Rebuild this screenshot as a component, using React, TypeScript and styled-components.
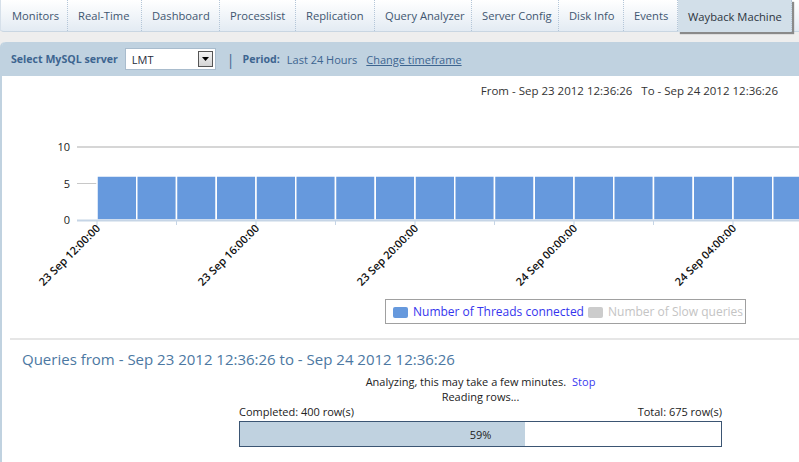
import React from "react";
import styled, { createGlobalStyle } from "styled-components";

const GlobalStyle = createGlobalStyle`
  html, body {
    margin: 0;
    padding: 0;
    background: #ffffff;
    font-family: "Open Sans", "Noto Sans", Arial, sans-serif;
    font-size: 11px;
    color: #333;
  }
`;

const Page = styled.div`
  width: 799px;
  height: 462px;
  overflow: hidden;
  background: #eeeeee;
`;

const TabBar = styled.div`
  display: flex;
  height: 31px;
  background: linear-gradient(#ffffff, #e3ebf3);
  border-bottom: 1px solid #c9d6e2;
  border-bottom-left-radius: 4px;
  font-size: 11.2px;
`;

const Tab = styled.div<{ active?: boolean; w: number }>`
  box-sizing: border-box;
  display: flex;
  align-items: center;
  width: ${({ w }) => w}px;
  padding-left: ${({ active }) => (active ? 10 : 10)}px;
  color: ${({ active }) => (active ? "#2c3440" : "#3f5670")};
  border-right: 1px dotted #b4c6d8;
  white-space: nowrap;
  background: ${({ active }) => (active ? "#d2dfe9" : "transparent")};
  box-shadow: ${({ active }) => (active ? "2px 2px 1px #8a8a8a" : "none")};
  height: ${({ active }) => (active ? "32px" : "31px")};
  &:first-child {
    padding-left: 11px;
    border-left: 1px solid #d6e0ea;
  }
`;

const Gap = styled.div`
  height: 10px;
`;

const Panel = styled.div`
  background: #ffffff;
  border-left: 2px solid #c0d2e0;
  border-top-left-radius: 5px;
  height: 420px;
`;

const FilterBar = styled.div`
  display: flex;
  align-items: center;
  height: 34px;
  padding-left: 9px;
  background: #c0d2e0;
  color: #3d6590;
  border-top-left-radius: 4px;
`;

const Label = styled.span`
  font-weight: 700;
  font-size: 10.6px;
  margin-right: 7px;
`;

const Select = styled.div`
  display: flex;
  align-items: center;
  justify-content: space-between;
  width: 81px;
  height: 20px;
  background: #ffffff;
  border: 1px solid #a9bccd;
  padding: 0 2px 0 6px;
  color: #1f2b3a;
`;

const DropButton = styled.div`
  width: 13px;
  height: 14px;
  border: 1px solid #555;
  background: linear-gradient(#f4f4f4, #d4d4d4);
  display: flex;
  align-items: center;
  justify-content: center;
`;

const Divider = styled.span`
  margin: 0 8px 0 11px;
  font-size: 14px;
  color: #3d6590;
`;

const Plain = styled.span`
  margin-right: 9px;
`;

const Link = styled.span`
  text-decoration: underline;
`;

const RangeLine = styled.div`
  text-align: right;
  padding: 7px 21px 0 0;
  height: 17px;
  font-size: 11.5px;
  color: #333;
`;

const ChartSvg = styled.svg`
  display: block;
  font-family: "Open Sans", "Noto Sans", Arial, sans-serif;
`;

const Rule = styled.div`
  margin: 0 0 0 8px;
  border-top: 2px solid #e6e6e6;
`;

const Heading = styled.div`
  padding: 9px 0 0 20px;
  font-size: 15px;
  color: #4c78a2;
  height: 25px;
`;

const Progress = styled.div`
  width: 483px;
  margin-left: 237px;
  display: flex;
  flex-direction: column;
  align-items: center;
`;

const StatusLine = styled.div`
  height: 15px;
  line-height: 15px;
  color: #222;
`;

const StopLink = styled.span`
  color: #3a3af0;
  margin-left: 6px;
`;

const Counts = styled.div`
  display: flex;
  justify-content: space-between;
  width: 100%;
  height: 15px;
  line-height: 15px;
  color: #222;
`;

const Track = styled.div`
  position: relative;
  box-sizing: border-box;
  width: 100%;
  height: 26px;
  margin-top: 2px;
  border: 1px solid #3b5573;
  background: #ffffff;
  display: flex;
  align-items: center;
  justify-content: center;
`;

const Fill = styled.div`
  position: absolute;
  left: 0;
  top: 0;
  bottom: 0;
  background: #c0d2e0;
`;

const Percent = styled.span`
  position: relative;
  color: #222;
`;

const tabs: [string, number][] = [
  ["Monitors", 68],
  ["Real-Time", 74],
  ["Dashboard", 78],
  ["Processlist", 76],
  ["Replication", 79],
  ["Query Analyzer", 97],
  ["Server Config", 87],
  ["Disk Info", 65],
  ["Events", 54],
];

const Chart = () => {
  const x0 = 97;
  const pitch = 39.75;
  const bars = Array.from({ length: 18 }, (_, i) => x0 + i * pitch);
  const ticks = Array.from({ length: 10 }, (_, i) => x0 + i * pitch * 2);
  const labels = [
    "23 Sep 12:00:00",
    "23 Sep 16:00:00",
    "23 Sep 20:00:00",
    "24 Sep 00:00:00",
    "24 Sep 04:00:00",
  ];
  return (
    <ChartSvg width={797} height={238} viewBox="2 100 797 238">
      <line x1={77} x2={799} y1={147} y2={147} stroke="#d6d6d6" strokeWidth={2} />
      <line x1={77} x2={799} y1={183.5} y2={183.5} stroke="#c8c8c8" strokeWidth={1} />
      {bars.map((x, i) => (
        <rect
          key={i}
          x={x}
          y={176}
          width={pitch}
          height={44}
          fill="#6699dd"
          stroke="#ffffff"
          strokeWidth={1.5}
        />
      ))}
      <line x1={77} x2={799} y1={220.5} y2={220.5} stroke="#c6d5e6" strokeWidth={2} />
      {ticks.map((x, i) => (
        <line key={i} x1={x} x2={x} y1={220} y2={225} stroke="#c6d5e6" strokeWidth={1} />
      ))}
      <g fontSize={11} fill="#222" textAnchor="end">
        <text x={70} y={151}>10</text>
        <text x={70} y={188}>5</text>
        <text x={70} y={224}>0</text>
      </g>
      {labels.map((l, i) => (
        <text
          key={l}
          x={x0 + 4 + i * pitch * 4}
          y={229}
          fontSize={11}
          fontWeight={600}
          fill="#111"
          textAnchor="end"
          transform={`rotate(-45 ${x0 + 4 + i * pitch * 4} 229)`}
        >
          {l}
        </text>
      ))}
      <rect x={385.5} y={299.5} width={360} height={24} fill="#fff" stroke="#a0a0a0" />
      <rect x={393} y={307} width={15} height={11} rx={2} fill="#6699dd" />
      <text x={413} y={316} fontSize={12} fill="#3535ee">
        Number of Threads connected
      </text>
      <rect x={588} y={307} width={15} height={11} rx={2} fill="#cccccc" />
      <text x={608} y={316} fontSize={12} fill="#c4c4c4">
        Number of Slow queries
      </text>
    </ChartSvg>
  );
};

export default function App() {
  const done = 400;
  const total = 675;
  const pct = Math.round((done / total) * 100);
  return (
    <Page>
      <GlobalStyle />
      <TabBar>
        {tabs.map(([t, w]) => (
          <Tab key={t} w={w}>
            {t}
          </Tab>
        ))}
        <Tab active w={114}>
          Wayback Machine
        </Tab>
      </TabBar>
      <Gap />
      <Panel>
        <FilterBar>
          <Label>Select MySQL server</Label>
          <Select>
            LMT
            <DropButton>
              <svg width="7" height="4" viewBox="0 0 7 4">
                <path d="M0 0 H7 L3.5 4 Z" fill="#000" />
              </svg>
            </DropButton>
          </Select>
          <Divider>|</Divider>
          <Label>Period:</Label>
          <Plain>Last 24 Hours</Plain>
          <Link>Change timeframe</Link>
        </FilterBar>
        <RangeLine>
          From - Sep 23 2012 12:36:26&nbsp;&nbsp; To - Sep 24 2012 12:36:26
        </RangeLine>
        <Chart />
        <Rule />
        <Heading>
          Queries from - Sep 23 2012 12:36:26 to - Sep 24 2012 12:36:26
        </Heading>
        <Progress>
          <StatusLine>
            Analyzing, this may take a few minutes.
            <StopLink>Stop</StopLink>
          </StatusLine>
          <StatusLine>Reading rows...</StatusLine>
          <Counts>
            <span>Completed: {done} row(s)</span>
            <span>Total: {total} row(s)</span>
          </Counts>
          <Track>
            <Fill style={{ width: `${(done / total) * 100}%` }} />
            <Percent>{pct}%</Percent>
          </Track>
        </Progress>
      </Panel>
    </Page>
  );
}
